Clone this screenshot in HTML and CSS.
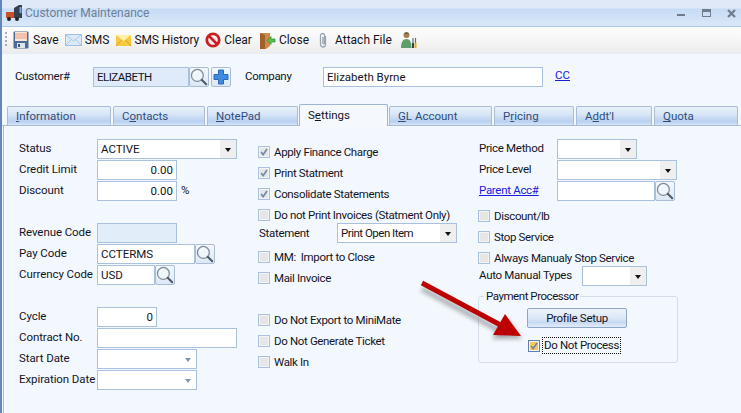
FILE: index.html
```html
<!DOCTYPE html>
<html lang="en">
<head>
<meta charset="utf-8">
<title>Customer Maintenance</title>
<link rel="stylesheet" href="styles.css">
</head>
<body>
<svg class="defs" width="0" height="0" aria-hidden="true">
  <defs>
    <symbol id="mag" viewBox="0 0 20 20">
      <circle cx="8.2" cy="8.2" r="6.6" fill="#eef5fb" stroke="#7f8c96" stroke-width="1.4"/>
      <path d="M4.500 6.500a4.500 4.500 0 0 1 4-2.400" fill="none" stroke="#fff" stroke-width="1.2"/>
      <path d="M13 13l5 5" stroke="#4f5a62" stroke-width="2.2" stroke-linecap="round"/>
    </symbol>
    <symbol id="tick" viewBox="0 0 12 12">
      <path d="M2.5 6l2.5 3.2L9.6 2.4" fill="none" stroke="#6f87a8" stroke-width="2"/>
    </symbol>
  </defs>
</svg>
<div class="window">
  <header class="titlebar">
    <svg class="title-icon" width="20" height="18" viewBox="0 0 20 18">
      <rect x="1" y="8" width="8" height="6" fill="#c8502a"/>
      <path d="M9 4l5-3h3v13H9z" fill="#34404e"/>
      <rect x="14.500" y="3" width="2" height="6" fill="#7fa6d8"/>
      <circle cx="4" cy="15" r="2" fill="#222"/>
      <circle cx="12" cy="15" r="2" fill="#222"/>
    </svg>
    <span class="title-text">Customer Maintenance</span>
    <div class="window-controls">
      <span class="ctl-min"></span>
      <span class="ctl-max"></span>
      <svg class="ctl-close" width="9" height="9" viewBox="0 0 9 9"><path d="M1 1l7 7M8 1L1 8" stroke="#707c8c" stroke-width="2.2"/></svg>
    </div>
  </header>

  <nav class="toolbar">
    <span class="grip"></span>
    <span class="tool tool-save">
      <svg width="16" height="18" viewBox="0 0 16 18">
        <rect x=".5" y=".5" width="15" height="17" rx="1" fill="#4b6c96"/>
        <rect x="2" y="1" width="12" height="9" fill="#fbe6d8"/>
        <path d="M2 3h12M2 5h12M2 7h12" stroke="#ec9a7a"/>
        <rect x="4" y="12" width="8" height="5" fill="#dfe5ec"/>
        <rect x="5" y="13" width="2" height="3" fill="#44566e"/>
      </svg>
      <span>Save</span>
    </span>
    <span class="tool tool-sms">
      <svg width="17" height="12" viewBox="0 0 17 12">
        <rect x=".5" y=".5" width="16" height="11" fill="#dbe9f8" stroke="#9dc0e6"/>
        <path d="M1 1l7.500 6L16 1M1 11l5.500-5.500M16 11l-5.500-5.500" fill="none" stroke="#a9c8ea"/>
      </svg>
      <span>SMS</span>
    </span>
    <span class="tool tool-history">
      <svg width="15" height="11" viewBox="0 0 15 11">
        <rect width="15" height="11" y="0" fill="#f6c843"/>
        <path d="M0 0l7.500 6L15 0z" fill="#fff0a8"/>
        <path d="M0 11l5.500-6M15 11L9.500 5" stroke="#d9a21f" fill="none"/>
      </svg>
      <span>SMS History</span>
    </span>
    <span class="tool tool-clear">
      <svg width="16" height="16" viewBox="0 0 16 16">
        <circle cx="8" cy="8" r="6.200" fill="#fbeeee" stroke="#c81e24" stroke-width="2.800"/>
        <path d="M3.500 3.500l9 9" stroke="#c81e24" stroke-width="2.600"/>
      </svg>
      <span>Clear</span>
    </span>
    <span class="tool tool-close">
      <svg width="17" height="17" viewBox="0 0 17 17">
        <path d="M1 1h10v13l-4 3H1z" fill="#cf8a4a"/>
        <path d="M1 1l5 2v14H1z" fill="#a4602a"/>
        <path d="M8 8.500l4-4v2.500h4v3h-4v2.500z" fill="#58c24a" stroke="#2a8a2a" stroke-width=".7"/>
      </svg>
      <span>Close</span>
    </span>
    <span class="tool tool-attach">
      <svg width="10" height="17" viewBox="0 0 10 17">
        <path d="M7.500 4v8.500a2.500 2.500 0 0 1-5 0V3.500a2 2 0 0 1 4 0V11a.8.8 0 0 1-1.600 0V5" fill="none" stroke="#9aa4ae" stroke-width="1.300"/>
      </svg>
      <span>Attach File</span>
    </span>
    <svg class="tool-user" width="17" height="18" viewBox="0 0 17 18">
      <circle cx="6.500" cy="4" r="3" fill="#a67c52"/>
      <path d="M4 3l2.500-2L9 3z" fill="#5a6a50"/>
      <path d="M1 17c0-6 2-9 5.500-9s5 3 5 9z" fill="#5e9e6a"/>
      <path d="M13 7v5M15.500 7v5" stroke="#707070" stroke-width="1.200"/>
      <rect x="14.500" y="12" width="2" height="5" fill="#e0b020"/>
      <rect x="12" y="12" width="2" height="5" fill="#38424c"/>
    </svg>
  </nav>

  <section class="customer">
    <label class="cust-label">Customer#</label>
    <span class="field field-cust">ELIZABETH</span>
    <span class="mag-btn"><svg width="18" height="18"><use href="#mag"/></svg></span>
    <span class="plus-btn">
      <svg width="16" height="16" viewBox="0 0 16 16"><path d="M5.500 1h5v4.500H15v5h-4.500V15h-5v-4.500H1v-5h4.500z" fill="#3f8be0" stroke="#2a68b8"/></svg>
    </span>
    <label class="company-label">Company</label>
    <span class="field field-company">Elizabeth Byrne</span>
    <a class="link cc-link">CC</a>
  </section>

  <div class="tabs">
    <span class="tab tab-1"><u>I</u>nformation</span>
    <span class="tab tab-2">C<u>o</u>ntacts</span>
    <span class="tab tab-3"><u>N</u>otePad</span>
    <span class="tab tab-active">S<u>e</u>ttings</span>
    <span class="tab tab-5"><u>G</u>L Account</span>
    <span class="tab tab-6">P<u>r</u>icing</span>
    <span class="tab tab-7">A<u>d</u>dt'l</span>
    <span class="tab tab-8"><u>Q</u>uota</span>
  </div>

  <main class="panel">
    <div class="col col-left">
      <div class="row"><label>Status</label><span class="field w140 combo">ACTIVE<i class="drop"></i></span></div>
      <div class="row"><label>Credit Limit</label><span class="field w80 num">0.00</span></div>
      <div class="row"><label>Discount</label><span class="field w80 num">0.00</span><span class="pct">%</span></div>
      <div class="row"></div>
      <div class="row"><label>Revenue Code</label><span class="field w80 disabled"></span></div>
      <div class="row"><label>Pay Code</label><span class="field w98">CCTERMS</span><span class="mag-btn"><svg width="18" height="18"><use href="#mag"/></svg></span></div>
      <div class="row"><label>Currency Code</label><span class="field w58">USD</span><span class="mag-btn"><svg width="18" height="18"><use href="#mag"/></svg></span></div>
      <div class="row"></div>
      <div class="row"><label>Cycle</label><span class="field w60 num">0</span></div>
      <div class="row"><label>Contract No.</label><span class="field w140"></span></div>
      <div class="row"><label>Start Date</label><span class="field w100 date"><i class="drop-blue"></i></span></div>
      <div class="row"><label>Expiration Date</label><span class="field w100 date"><i class="drop-blue"></i></span></div>
    </div>

    <div class="col col-mid">
      <div class="check"><i class="box"><svg width="12" height="12"><use href="#tick"/></svg></i>Apply Finance Charge</div>
      <div class="check"><i class="box"><svg width="12" height="12"><use href="#tick"/></svg></i>Print Statment</div>
      <div class="check"><i class="box"><svg width="12" height="12"><use href="#tick"/></svg></i>Consolidate Statements</div>
      <div class="check"><i class="box"></i>Do not Print Invoices (Statment Only)</div>
      <div class="row statement"><label>Statement</label><span class="field w120 combo">Print Open Item<i class="drop"></i></span></div>
      <div class="check"><i class="box"></i>MM:&nbsp; Import to Close</div>
      <div class="check"><i class="box"></i>Mail Invoice</div>
      <div class="check"></div>
      <div class="check"><i class="box"></i>Do Not Export to MiniMate</div>
      <div class="check"><i class="box"></i>Do Not Generate Ticket</div>
      <div class="check"><i class="box"></i>Walk In</div>
    </div>

    <div class="col col-right">
      <div class="row"><label class="lbl-right">Price Method</label><span class="field w80 combo"><i class="drop"></i></span></div>
      <div class="row"><label class="lbl-right">Price Level</label><span class="field w120 combo"><i class="drop"></i></span></div>
      <div class="row"><label class="lbl-right"><a class="link">Parent Acc#</a></label><span class="field w98"></span><span class="mag-btn"><svg width="18" height="18"><use href="#mag"/></svg></span></div>
      <div class="check first"><i class="box"></i>Discount/lb</div>
      <div class="check"><i class="box"></i>Stop Service</div>
      <div class="check"><i class="box"></i>Always Manualy Stop Service</div>
      <div class="row auto"><label>Auto Manual Types</label><span class="field w65 combo"><i class="drop"></i></span></div>
      <fieldset class="group">
        <legend>Payment Processor</legend>
        <button class="profile" type="button">Profile Setup</button>
        <div class="check focus-row"><i class="box box-on"><svg width="10" height="10" viewBox="0 0 12 12"><path d="M2.500 6l2.500 3.200L9.600 2.400" fill="none" stroke="#6f87a8" stroke-width="2"/></svg></i><span class="focus">Do Not Process</span></div>
      </fieldset>
    </div>
  </main>

  <svg class="arrow" width="741" height="413" viewBox="0 0 741 413" aria-hidden="true">
    <defs><filter id="sh" x="-20%" y="-20%" width="140%" height="140%"><feGaussianBlur stdDeviation="2"/></filter></defs>
    <path d="M422 286L506 331" stroke="#555" stroke-width="5" opacity=".45" filter="url(#sh)" transform="translate(0 3)"/>
    <path d="M506 317L522 339L492 339z" fill="#555" opacity=".45" filter="url(#sh)"/>
    <path d="M422 283L508 329" stroke="#bd0000" stroke-width="5"/>
    <path d="M505 314L521 336L493 335z" fill="#bd0000"/>
  </svg>
</div>
</body>
</html>
```

FILE: styles.css
```css
* { box-sizing: border-box; }
html, body { margin: 0; padding: 0; }
body { font-family: Roboto, "Liberation Sans", Arial, sans-serif; font-size: 11.5px; color: #14141e; }
.defs { position: absolute; }
.window { position: relative; width: 741px; height: 413px; overflow: hidden; background: #f3f8fe; border-left: 2px solid #5f87bd; }

.titlebar { display: flex; align-items: center; height: 27px; padding-left: 3px; background: linear-gradient(#dfe9f8 0, #dfe9f8 8px, #c6dbf5 9px, #dbe8f9 26px); border-bottom: 1px solid #a9c8ea; }
.title-text { font-size: 12px; color: #6e7f96; }
.window-controls { margin-left: auto; display: flex; align-items: center; height: 12px; padding-right: 5px; }
.ctl-min { width: 8px; height: 2px; background: #707c8c; margin-top: 4px; margin-right: 17px; }
.ctl-max { width: 9px; height: 8px; border: 1px solid #707c8c; border-top-width: 3px; margin-right: 16px; }

.toolbar { display: flex; align-items: center; height: 27px; background: linear-gradient(#fdfdfe, #f7f7f7 45%, #ececec); padding-left: 3px; border-bottom: 1px solid #e2edf9; }
.grip { width: 2px; height: 16px; margin-right: 6px; background: repeating-linear-gradient(#a9adb3 0 2px, transparent 2px 4px); }
.tool { display: inline-flex; align-items: center; gap: 3px; font-size: 12px; }
.tool-save { gap: 4px; }
.tool-sms { margin-left: 6px; }
.tool-history { margin-left: 7px; letter-spacing: -.1px; }
.tool-clear { margin-left: 6px; }
.tool-close { margin-left: 7px; }
.tool-attach { margin-left: 9px; gap: 7px; }
.tool-user { margin-left: 8px; }

.customer { display: flex; align-items: center; height: 51px; padding: 2px 0 8px 13px; }
.cust-label { width: 78px; margin-top: -2px; letter-spacing: -.25px; }
.company-label { width: 78px; margin-left: 14px; margin-top: -2px; letter-spacing: -.3px; }
.field-cust { width: 96px; background: #dfeafa; letter-spacing: -.5px; }
.field-company { width: 220px; }
.cc-link { margin-left: 12px; margin-top: -4px; }

.field { display: flex; align-items: center; position: relative; height: 20px; flex: none; border: 1px solid #a9c0de; background-color: #fff; padding: 0 3px; }
.customer .field-cust { background: #dfeafa; }
.link { color: #1a1ae0; text-decoration: underline; }
.mag-btn, .plus-btn { display: inline-flex; align-items: center; justify-content: center; flex: none; width: 20px; height: 20px; border: 1px solid #a9bdd6; border-radius: 2px; background: linear-gradient(#f4f8fd, #dce8f6); }
.plus-btn { margin-left: 2px; }

.tabs { display: flex; align-items: flex-end; height: 21px; margin-top: 0; padding-left: 5px; border-bottom: 1px solid #a9bdd6; }
.tab { height: 19px; margin-right: 2px; padding: 2px 0 0 8px; flex: none; border: 1px solid #a9bdd6; border-bottom: 0; border-radius: 2px 2px 0 0; color: #2f4d7c; background: linear-gradient(#e8f0fb, #d8e6f8 40%, #b9d0ef 80%, #d6e4f7); }
.tab u { text-underline-offset: 1px; }
.tab-1 { width: 104px; }
.tab-2 { width: 92px; }
.tab-3 { width: 91px; margin-right: 1px; }
.tab-active { width: 89px; height: 22px; margin: 0 1px 0 0; position: relative; top: 1px; z-index: 1; background: #f5f9fe; color: #14141e; border-color: #9fb4d0; padding-top: 3px; }
.tab-5 { width: 103px; }
.tab-6 { width: 80px; }
.tab-7 { width: 76px; }
.tab-8 { width: 84px; margin-right: 0; }

.panel { display: grid; grid-template-columns: 239px 220px 1fr; height: 287px; padding-left: 15px; margin-left: 1px; border-left: 1px solid #a9bdd6; }
.col-left { padding-top: 13px; }
.col-mid { padding-top: 15px; }
.col-right { padding-top: 13px; }
.col-left label { letter-spacing: -.08px; }
.row { display: flex; align-items: flex-start; height: 21px; }
.row label { width: 78px; flex: none; padding-top: 2px; white-space: nowrap; }
.col-right label, .statement label { letter-spacing: -.3px; }
.row .lbl-right { padding-left: 1px; width: 79px; }
.w140 { width: 140px; }
.w120 { width: 120px; }
.w100 { width: 100px; }
.w98 { width: 98px; }
.w80 { width: 80px; }
.w65 { width: 65px; }
.w60 { width: 60px; }
.w58 { width: 58px; }
.num { justify-content: flex-end; }
.disabled { background: #e2edfa; }
.pct { margin-left: 4px; padding-top: 2px; }
.combo .drop { position: absolute; right: 0; top: 0; bottom: 0; width: 16px; background: #efefef; }
.combo .drop::after { content: ""; position: absolute; left: 5px; top: 8px; border: 3.5px solid transparent; border-top: 4px solid #111; border-bottom: 0; }
.drop-blue { position: absolute; right: 5px; top: 8px; border: 3.5px solid transparent; border-top: 4px solid #7f95b4; border-bottom: 0; }

.check { display: flex; align-items: center; height: 21px; white-space: nowrap; letter-spacing: -.35px; }
.box { display: inline-flex; align-items: center; justify-content: center; flex: none; width: 12px; height: 12px; margin-right: 4px; border: 1px solid #a9c0de; background: #e6e6e6; box-shadow: inset 0 0 0 1px #f4f4f4; }
.statement { height: 23px; margin-top: -2px; padding-left: 1px; }
.statement label { padding-top: 3px; }
.statement .field { letter-spacing: -.5px; }
.col-right .first { margin-top: 3px; }
.auto { height: 23px; margin-top: -2px; padding-left: 1px; }
.auto label { width: 103px; padding-top: 2px; }
.group { display: block; position: relative; width: 200px; height: 73px; margin: 1px 0 0; padding: 0; border: 1px solid #d4deea; border-radius: 3px; }
.group legend { margin-left: 5px; padding: 0 2px; line-height: 12px; font-size: 11.5px; letter-spacing: -.45px; }
.profile { display: block; width: 100px; height: 20px; margin: 6px 0 0 48px; padding: 0; border: 1px solid #8ea6c6; border-radius: 2px; font: inherit; letter-spacing: -.3px; color: #14141e; background: linear-gradient(#edf3fb, #dce8f7 50%, #c8daf2 75%, #e2ecf9); }
.focus-row { height: 17px; margin: 9px 0 0 49px; }
.box-on { background: #f6c85a; border-color: #5f7ea8; width: 12px; height: 12px; margin-right: 3px; }
.focus { outline: 1px dotted #111; padding: 0 1px; line-height: 15px; }
.arrow { position: absolute; left: -2px; top: 0; pointer-events: none; }
```
